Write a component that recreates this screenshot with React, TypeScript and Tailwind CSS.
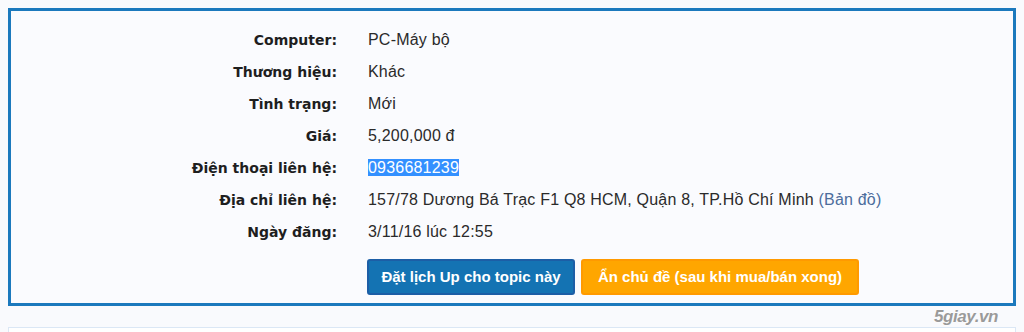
import React from "react";

const rows: { label: string; value: React.ReactNode }[] = [
  { label: "Computer:", value: "PC-Máy bộ" },
  { label: "Thương hiệu:", value: "Khác" },
  { label: "Tình trạng:", value: "Mới" },
  { label: "Giá:", value: "5,200,000 đ" },
  {
    label: "Điện thoại liên hệ:",
    value: <span className="bg-[#3390ff] text-white">0936681239</span>,
  },
  {
    label: "Địa chỉ liên hệ:",
    value: (
      <>
        157/78 Dương Bá Trạc F1 Q8 HCM, Quận 8, TP.Hồ Chí Minh{" "}
        <span className="text-[#4c6d9c]">(Bản đồ)</span>
      </>
    ),
  },
  { label: "Ngày đăng:", value: "3/11/16 lúc 12:55" },
];

export default function App() {
  return (
    <div
      className="relative h-[332px] w-[1024px] overflow-hidden bg-[#f9fafd] pt-2 text-[#222]"
      style={{ fontFamily: "'DejaVu Sans', Verdana, sans-serif" }}
    >
      <div className="mx-2 h-[298px] border-[3px] border-[#1b79bd] bg-[#fafbfe] pt-[13px]">
        <div className="grid grid-cols-[326px_1fr] gap-x-[31px] leading-[32px]">
          {rows.map((r) => (
            <React.Fragment key={r.label}>
              <div className="text-right text-[14px] font-bold text-[#1e1e1e]">{r.label}</div>
              <div
                className="text-[16px] tracking-[0.2px] text-[#2a2a2a]"
                style={{ fontFamily: "'Liberation Sans', Arial, sans-serif" }}
              >
                {r.value}
              </div>
            </React.Fragment>
          ))}
        </div>
        <div
          className="mt-[11px] flex gap-[6px] pl-[356px]"
          style={{ fontFamily: "'Liberation Sans', Arial, sans-serif" }}
        >
          <button className="h-[36px] w-[208px] rounded-[3px] border-2 border-[#1c5ea6] bg-[#1473b3] text-[15px] font-bold text-white">
            Đặt lịch Up cho topic này
          </button>
          <button className="h-[36px] w-[278px] rounded-[3px] border-2 border-[#ff9a00] bg-[#ffa600] text-[15px] font-bold text-white">
            Ẩn chủ đề (sau khi mua/bán xong)
          </button>
        </div>
      </div>
      <div className="mx-2 mt-[21px] h-[40px] border border-[#dbe7f5] bg-white" />
      <div
        className="absolute left-[934px] top-[304px] text-[17px] font-bold italic tracking-tight text-[#9a9a9a]"
        style={{
          fontFamily: "'Liberation Sans', Arial, sans-serif",
          textShadow: "0 0 2px #fff, 0 0 2px #fff",
        }}
      >
        5giay.vn
      </div>
    </div>
  );
}
